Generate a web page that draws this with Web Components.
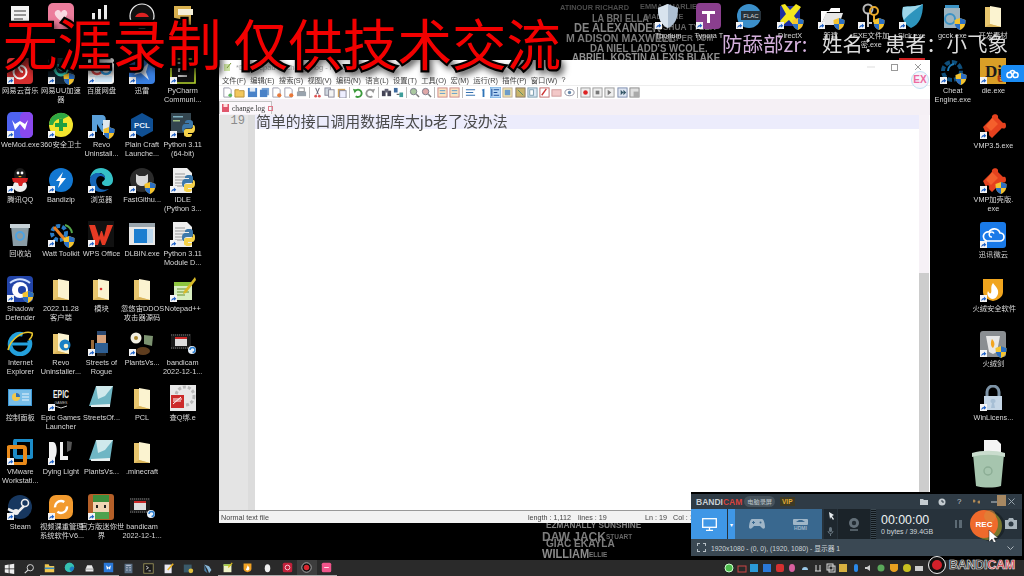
<!DOCTYPE html>
<html lang="zh">
<head>
<meta charset="utf-8">
<title>Desktop</title>
<style>
  html, body { margin: 0; padding: 0; background: #000; }
  body { width: 1024px; height: 576px; overflow: hidden; font-family: "Liberation Sans", "Noto Sans CJK SC", sans-serif; }
</style>
</head>
<body>
<x-desktop>
  <wall-names></wall-names>

  <icon-grid style="left:0;top:1px" cols="5">
    <desk-icon icon="doc"></desk-icon>
    <desk-icon icon="pink"></desk-icon>
    <desk-icon icon="chart"></desk-icon>
    <desk-icon icon="ring"></desk-icon>
    <desk-icon icon="yellowdoc"></desk-icon>

    <desk-icon icon="netease" arrow>网易云音乐</desk-icon>
    <desk-icon icon="uu" arrow shield>网易UU加速<br>器</desk-icon>
    <desk-icon icon="baidu" arrow>百度网盘</desk-icon>
    <desk-icon icon="xunlei" arrow>迅雷</desk-icon>
    <desk-icon icon="pycharm" arrow>PyCharm<br>Communi...</desk-icon>

    <desk-icon icon="wemod" arrow>WeMod.exe</desk-icon>
    <desk-icon icon="s360" arrow>360安全卫士</desk-icon>
    <desk-icon icon="revo" arrow shield>Revo<br>Uninstall...</desk-icon>
    <desk-icon icon="pcl" arrow>Plain Craft<br>Launche...</desk-icon>
    <desk-icon icon="python" arrow>Python 3.11<br>(64-bit)</desk-icon>

    <desk-icon icon="qq" arrow>腾讯QQ</desk-icon>
    <desk-icon icon="bandizip" arrow>Bandizip</desk-icon>
    <desk-icon icon="edge" arrow>浏览器</desk-icon>
    <desk-icon icon="github" arrow shield>FastGithu...</desk-icon>
    <desk-icon icon="idle" arrow>IDLE<br>(Python 3...</desk-icon>

    <desk-icon icon="bin">回收站</desk-icon>
    <desk-icon icon="watt" arrow shield>Watt Toolkit</desk-icon>
    <desk-icon icon="wps" arrow>WPS Office</desk-icon>
    <desk-icon icon="dlbin">DLBIN.exe</desk-icon>
    <desk-icon icon="idle" arrow>Python 3.11<br>Module D...</desk-icon>

    <desk-icon icon="shadow" arrow shield>Shadow<br>Defender</desk-icon>
    <desk-icon icon="folder">2022.11.28<br>客户端</desk-icon>
    <desk-icon icon="folderred">模块</desk-icon>
    <desk-icon icon="folder">忽悠宙DDOS<br>攻击器源码</desk-icon>
    <desk-icon icon="notepad" arrow>Notepad++</desk-icon>

    <desk-icon icon="ie">Internet<br>Explorer</desk-icon>
    <desk-icon icon="folderedge">Revo<br>Uninstaller...</desk-icon>
    <desk-icon icon="rogue" arrow>Streets of<br>Rogue</desk-icon>
    <desk-icon icon="plants" arrow>PlantsVs...</desk-icon>
    <desk-icon icon="bandifile">bandicam<br>2022-12-1...</desk-icon>

    <desk-icon icon="panel">控制面板</desk-icon>
    <desk-icon icon="epic" arrow>Epic Games<br>Launcher</desk-icon>
    <desk-icon icon="notes">StreetsOf...</desk-icon>
    <desk-icon icon="folder">PCL</desk-icon>
    <desk-icon icon="qbang">查Q绑.e</desk-icon>

    <desk-icon icon="vmware" arrow>VMware<br>Workstati...</desk-icon>
    <desk-icon icon="dying" arrow>Dying Light</desk-icon>
    <desk-icon icon="notes">PlantsVs...</desk-icon>
    <desk-icon icon="folder">.minecraft</desk-icon>
    <div></div>

    <desk-icon icon="steam" arrow>Steam</desk-icon>
    <desk-icon icon="orange" arrow>视频课重管理<br>系统软件V6...</desk-icon>
    <desk-icon icon="mini" arrow>官方版迷你世<br>界</desk-icon>
    <desk-icon icon="bandifile">bandicam<br>2022-12-1...</desk-icon>
  </icon-grid>

  <icon-grid style="left:648px;top:1px" cols="9">
    <desk-icon icon="thorium" arrow>Thorium</desk-icon>
    <desk-icon icon="tpurple" arrow>Typora T</desk-icon>
    <desk-icon icon="flac" arrow></desk-icon>
    <desk-icon icon="xcross" arrow shield>DirectX</desk-icon>
    <desk-icon icon="whitefolder" arrow shield>新建</desk-icon>
    <desk-icon icon="keys" arrow shield>EXE文件加<br>密.exe</desk-icon>
    <desk-icon icon="blueshield" arrow>Sick.exe</desk-icon>
    <desk-icon icon="canlock" shield>gcck.exe</desk-icon>
    <desk-icon icon="folder">开发素材</desk-icon>
  </icon-grid>

  <icon-grid style="left:932.5px;top:56px" cols="2">
    <desk-icon icon="cheat" arrow shield>Cheat<br>Engine.exe</desk-icon>
    <desk-icon icon="die" arrow>die.exe</desk-icon>
    <div></div><desk-icon icon="puzzle" arrow>VMP3.5.exe</desk-icon>
    <div></div><desk-icon icon="puzzle" arrow shield>VMP加壳版.<br>exe</desk-icon>
    <div></div><desk-icon icon="cloud" arrow>迅讯微云</desk-icon>
    <div></div><desk-icon icon="huorong" arrow>火绒安全软件</desk-icon>
    <div></div><desk-icon icon="hrsword" arrow shield>火绒剑</desk-icon>
    <div></div><desk-icon icon="lock" arrow>WinLicens...</desk-icon>
  </icon-grid>

  <pet-bin></pet-bin>
  <cloud-tab></cloud-tab>
  <npp-window></npp-window>
  <task-bar></task-bar>
  <bandi-panel></bandi-panel>
  <bandi-mark></bandi-mark>
  <top-banner></top-banner>
</x-desktop>

<script>
// icon artwork, all on a 26x26 box
const FOLDER = '<path d="M5 4h7l2 2h7v18H5z" fill="#e8c66e"/><path d="M10 3l11 2v19l-11-3z" fill="#fbf3d0"/><path d="M5 24l5-3 11 3z" fill="#d9b45a"/>';
const PY = '<path d="M15 11c0-3 2-3 4-3s4 0 4 3v3c0 1-1 2-2 2h-4c-2 0-3 1-3 3v1c-2 0-2-2-2-4s1-4 3-4h4v-1z" fill="#3c78aa"/><path d="M23 13c2 0 2 2 2 4s-1 4-3 4h-4v1h4c0 3-2 3-4 3s-4 0-4-3v-3c0-1 1-2 2-2h4c2 0 3-1 3-3z" fill="#f5d24a"/>';
const ICONS = {
  doc: '<path d="M4 3h18v22H4z" fill="#f2f2f2"/><path d="M7 8h12M7 12h12M7 16h9" stroke="#777" stroke-width="1.5"/>',
  pink: '<rect x="0" y="0" width="26" height="26" rx="5" fill="#ec7d9c"/><path d="M7 9c3-4 6-1 6 1 0-2 4-5 6-1s-6 9-6 9-8-5-6-9z" fill="#fff" opacity=".7"/>',
  chart: '<path d="M4 22V10h3v12zM10 22V6h3v16zM16 22V2h3v20z" fill="#eee"/>',
  ring: '<circle cx="13" cy="13" r="12" fill="#111" stroke="#eee" stroke-width="1.2"/><path d="M6 14a8 8 0 0 1 14 0z" fill="#d22"/>',
  yellowdoc: '<path d="M4 3h17v22H4z" fill="#d8b04e"/><path d="M8 6h15v6H8z" fill="#f5f0d8"/>',
  netease: '<rect width="26" height="26" rx="4" fill="#d52f2f"/><circle cx="13" cy="14" r="6.5" fill="none" stroke="#fff" stroke-width="2"/><path d="M14 4c-3 1-3 5-1 8 1 2 3 2 3 2" fill="none" stroke="#fff" stroke-width="2"/>',
  uu: '<rect width="26" height="26" rx="4" fill="#12222e"/><path d="M6 8c1 12 13 12 14 0" fill="none" stroke="#34c4b0" stroke-width="3"/><path d="M10 6c1 8 6 8 7 0" fill="none" stroke="#1e8f92" stroke-width="2"/>',
  baidu: '<rect width="26" height="26" rx="3" fill="#f4f4f4"/><circle cx="9" cy="11" r="5" fill="none" stroke="#df4a4a" stroke-width="2.5"/><circle cx="18" cy="11" r="5" fill="none" stroke="#2f9fe8" stroke-width="2.5"/><path d="M2 18h22v6H2z" fill="#cfe6f6"/>',
  xunlei: '<rect width="26" height="26" rx="4" fill="#3a80e2"/><path d="M5 8l8 3 7-7-3 10 3 8-8-7-7 2 4-5z" fill="#dfe9f7"/>',
  pycharm: '<rect width="26" height="26" fill="#111"/><path d="M1 1h24v24H1z" fill="none" stroke="#b5d32c" stroke-width="1.6"/><path d="M8 18h9" stroke="#fff" stroke-width="1.5"/><path d="M7 5h5c3 0 3 6 0 6H9v3M15 5h4" stroke="#ddd" stroke-width="1.6" fill="none"/>',
  wemod: '<rect width="26" height="26" rx="5" fill="#4f63f0"/><rect x="13" width="13" height="26" rx="5" fill="#8a48ee"/><path d="M5 8l3 10 5-6 5 6 3-10-3 4-5-3-5 3z" fill="#fff"/>',
  s360: '<circle cx="13" cy="13" r="12" fill="#f4e52e"/><path d="M1 13a12 12 0 0 1 20-9l-6 3a8 8 0 0 0-10 6z" fill="#2ea843"/><path d="M13 7v12M7 13h12" stroke="#1e9e42" stroke-width="4"/>',
  revo: '<path d="M4 3h10c5 0 5 8 0 9l5 8h-5l-5-8v8H4z" fill="#5a9fd8"/><path d="M15 8h7l-1 15h-6z" fill="#dfe8ee"/>',
  pcl: '<path d="M13 1l11 6v12l-11 6-11-6V7z" fill="#0f4f93"/><text x="13" y="16" font-size="8" font-weight="700" text-anchor="middle" fill="#e6f1fb" font-family="Liberation Sans">PCL</text>',
  python: '<rect x="1" y="1" width="20" height="20" fill="#33454f"/><rect x="3" y="4" width="10" height="1.5" fill="#7fb0c0"/><rect x="3" y="8" width="7" height="1.5" fill="#a0c080"/>' + PY,
  idle: '<path d="M3 1h14l5 5v20H3z" fill="#eee"/><path d="M5 7h10M5 10h12M5 13h8M5 16h9M5 19h7" stroke="#999"/>' + PY,
  qq: '<ellipse cx="13" cy="8" rx="6" ry="7" fill="#1a1a1a"/><ellipse cx="13" cy="19" rx="7" ry="6" fill="#eee"/><path d="M5 11h16l-1 4-4 1-1 3h-3l-1-3-5-1z" fill="#d62020"/><circle cx="11" cy="6" r="1.4" fill="#fff"/><circle cx="15" cy="6" r="1.4" fill="#fff"/><path d="M11 9h4l-2 1.5z" fill="#f5b32a"/>',
  bandizip: '<circle cx="13" cy="13" r="12" fill="#1277d1"/><path d="M15 5l-7 9h4l-2 7 8-10h-5z" fill="#fff"/>',
  edge: '<path d="M13 1a12 12 0 0 1 12 12c0 4-3 6-6 6-4 0-5-2-5-3 0-2 3-2 3-5 0-3-3-5-6-5C7 6 3 9 2 11 3 5 7 1 13 1z" fill="#35c1c7"/><path d="M2 11c1-3 5-5 8-5 3 0 8 2 7 6-1-3-5-4-7-2-3 2-2 8 1 11 2 2 6 2 10 1-3 2-5 3-8 3C6 25 1 19 2 11z" fill="#1565b5"/>',
  github: '<circle cx="13" cy="13" r="12" fill="#2b2b2b"/><path d="M7 7l3 2h6l3-2v7c0 3-3 5-6 5s-6-2-6-5z" fill="#d8d8d8"/>',
  bin: '<path d="M4 5h18l-2 20H6z" fill="#8b9da6"/><path d="M3 3h20v4H3z" fill="#c7d2d8"/><circle cx="13" cy="15" r="4" fill="none" stroke="#4fa3e0" stroke-width="2"/>',
  watt: '<circle cx="11" cy="12" r="7" fill="none" stroke="#2a7cc6" stroke-width="4" stroke-dasharray="4 2"/><path d="M6 6l12 14" stroke="#e67d22" stroke-width="3"/><path d="M17 4a10 10 0 0 1 7 8" fill="none" stroke="#56a64a" stroke-width="2"/>',
  wps: '<rect width="26" height="26" fill="#111"/><path d="M1 4h6l4 12 2-6h1l2 6 3-12h6l-8 20h-3l-2-6-2 6h-3z" fill="#e53a24"/>',
  dlbin: '<rect y="2" width="26" height="22" fill="#e8e8e8"/><rect y="2" width="26" height="4" fill="#9aa5ad"/><rect x="5" y="8" width="13" height="14" fill="#1c7ed0"/><rect x="18" y="8" width="6" height="14" fill="#bcd8ef"/>',
  shadow: '<rect width="26" height="26" rx="4" fill="#2244a8"/><circle cx="13" cy="14" r="8" fill="#fff"/><circle cx="15" cy="14" r="4" fill="#2244a8"/><path d="M3 7c6-5 14-5 20 0" stroke="#cfe0ff" stroke-width="2" fill="none"/>',
  folder: FOLDER,
  folderred: FOLDER + '<circle cx="13" cy="13" r="1.3" fill="#d33"/>',
  folderedge: FOLDER + '<circle cx="17" cy="15" r="5.5" fill="#1a80c4"/><circle cx="18" cy="16" r="2.3" fill="#fbf3d0"/>',
  notepad: '<path d="M4 6h18v18H4z" fill="#d8eec0"/><path d="M4 6h18v4H4z" fill="#8ec63f"/><path d="M7 13h10M7 16h12M7 19h8" stroke="#699030"/><path d="M25 1L14 15l-1 3 3-1L26 4z" fill="#d8b928"/>',
  ie: '<circle cx="13" cy="14" r="10" fill="none" stroke="#23a0dc" stroke-width="4.5" stroke-dasharray="44 9" transform="rotate(32 13 14)"/><path d="M5 14h17" stroke="#23a0dc" stroke-width="3"/><path d="M1 20C4 8 17 0 25 3c1 2-1 5-3 7" fill="none" stroke="#e8c52e" stroke-width="1.6"/>',
  rogue: '<rect x="9" y="1" width="9" height="4" fill="#2c4a72"/><rect x="9" y="5" width="9" height="8" fill="#d6a27c"/><rect x="7" y="13" width="13" height="10" fill="#2e5f94"/><rect x="3" y="10" width="3" height="12" fill="#9b6b3a"/><rect x="9" y="23" width="9" height="3" fill="#222"/>',
  plants: '<circle cx="7" cy="8" r="5.5" fill="#f1efe2"/><circle cx="7" cy="8" r="2" fill="#a9872e"/><path d="M15 5l9 1-1 10-8-2z" fill="#7c9270"/><ellipse cx="14" cy="21" rx="7" ry="4" fill="#5f3d1e"/>',
  bandifile: '<rect x="1" y="4" width="20" height="15" fill="#1a1a1a"/><rect x="5" y="7" width="12" height="9" fill="#ddd"/><rect x="5" y="7" width="12" height="2" fill="#c92828"/><path d="M1 5h20M1 18h20" stroke="#777" stroke-dasharray="1 1"/><circle cx="22" cy="20" r="4" fill="#eaf2fa"/><path d="M20 20a2.5 2.5 0 1 1 2.5 2.5" stroke="#2a7ed0" fill="none" stroke-width="1.4"/>',
  panel: '<rect x="1" y="4" width="24" height="17" fill="#3e9ad8"/><rect x="2" y="5" width="22" height="15" fill="#79bee8"/><circle cx="9" cy="12" r="4" fill="#f2c84a"/><path d="M9 12V8a4 4 0 0 1 4 4z" fill="#3070b8"/><path d="M15 9h7M15 12h7M15 15h7" stroke="#eaf5fd"/>',
  epic: '<text x="13" y="13" font-size="11" font-weight="700" text-anchor="middle" fill="#eee" font-family="Liberation Sans" textLength="16" lengthAdjust="spacingAndGlyphs">EPIC</text><text x="13" y="18.500" font-size="3.600" text-anchor="middle" fill="#bbb" font-family="Liberation Sans">GAMES</text><path d="M7 21l6 2 6-2" stroke="#ccc" fill="none"/>',
  notes: '<path d="M8 1h17l-3 20H1z" fill="#6fb6c4"/><path d="M8 1h17l-8 10-7 3z" fill="#cfe9ec"/><path d="M3 20l19-1v3H3z" fill="#e8f0f0"/>',
  qbang: '<rect width="26" height="26" fill="#e8e8e8"/><circle cx="15" cy="11" r="9" fill="none" stroke="#b8b8b8" stroke-width="3" stroke-dasharray="3 2"/><rect x="1" y="10" width="13" height="13" fill="#cc2a2a"/><path d="M3 19l8-7M3 14h9M3 16h8" stroke="#fff"/>',
  vmware: '<rect x="8" y="1" width="17" height="17" rx="2" fill="none" stroke="#1c8cc8" stroke-width="4"/><rect x="1" y="8" width="17" height="17" rx="2" fill="none" stroke="#e98a1a" stroke-width="4"/>',
  dying: '<path d="M1 3h4c5 0 5 17 0 17H1zM12 3h3v14h5v4h-8z" fill="#f2f2f2"/><path d="M19 2l5 1-1 8-4 2z" fill="#555"/>',
  steam: '<circle cx="13" cy="13" r="12" fill="#17375f"/><circle cx="18" cy="9" r="3.5" fill="none" stroke="#eee" stroke-width="1.6"/><path d="M1 15l9 4 7-7" fill="none" stroke="#eee" stroke-width="2.5"/><circle cx="9" cy="18" r="3" fill="#eee"/>',
  orange: '<rect x="1" y="1" width="24" height="24" rx="7" fill="#f29a2e"/><circle cx="13" cy="13" r="6" fill="none" stroke="#fff" stroke-width="2.4" stroke-dasharray="13 5"/>',
  mini: '<rect width="26" height="26" rx="3" fill="#b45f28"/><rect x="5" y="1" width="16" height="8" fill="#3d8f3d"/><rect x="5" y="8" width="16" height="10" fill="#f1d5b4"/><rect x="8" y="11" width="2" height="3" fill="#222"/><rect x="16" y="11" width="2" height="3" fill="#222"/><rect x="5" y="18" width="16" height="7" fill="#4ea24e"/>',
  thorium: '<path d="M13 1l10 4c0 10-3 17-10 20C6 22 3 15 3 5z" fill="#aebfd2"/><path d="M13 1v24C6 22 3 15 3 5z" fill="#d8e3ee"/>',
  tpurple: '<rect width="25" height="26" rx="4" fill="#8a3f8e"/><path d="M6 8h13v3h-5v9h-3v-9H6z" fill="#fff"/>',
  flac: '<circle cx="13" cy="13" r="12" fill="#3b8fca"/><rect x="5" y="8" width="20" height="9" fill="#27333c"/><text x="15" y="15" font-size="6" text-anchor="middle" fill="#ddd" font-family="Liberation Sans">FLAC</text>',
  xcross: '<rect x="3" y="3" width="20" height="20" fill="#1c2ea0"/><path d="M4 2l4-1 5 6 6-6 5 3-7 9 6 8-5 3-6-7-6 5-3-4 6-7z" fill="#f2e51e"/>',
  whitefolder: '<path d="M3 8h8l2-3h9v4H9L3 22z" fill="#fff"/><path d="M3 22l5-12h17l-4 12z" fill="#e6e6e6"/>',
  keys: '<circle cx="10" cy="6" r="4.5" fill="none" stroke="#b6b6b6" stroke-width="2"/><path d="M10 10v14M10 20h4" stroke="#c8c8c8" stroke-width="2"/><circle cx="16" cy="8" r="4" fill="none" stroke="#e8a82a" stroke-width="2"/><path d="M16 12v7" stroke="#e8a82a" stroke-width="2"/>',
  blueshield: '<path d="M24 1c-7 3-14 2-20 3-2 9 0 17 8 21 8-3 12-12 12-24z" fill="#2d94bd"/><path d="M24 1c-7 3-14 2-20 3-1 6-1 9 1 13C9 12 17 6 24 1z" fill="#9ed7ea"/>',
  canlock: '<path d="M6 2h14v3H6z" fill="#3c93c5"/><path d="M5 5h16v20H5z" fill="#9db4c0"/><circle cx="11" cy="16" r="5" fill="none" stroke="#3c93c5" stroke-width="2"/>',
  cheat: '<circle cx="12" cy="13" r="9" fill="none" stroke="#0f4f7c" stroke-width="4" stroke-dasharray="5 2"/><path d="M14 6a7 7 0 0 0-6 7" fill="none" stroke="#1c7ab5" stroke-width="2"/>',
  die: '<rect width="26" height="26" fill="#d99f27"/><text x="5" y="19" font-size="17" font-weight="700" fill="#1a1a1a" font-family="Liberation Serif">Di</text><text x="17" y="24" font-size="15" font-weight="700" fill="#ad3c16" font-family="Liberation Serif">e</text>',
  puzzle: '<path d="M3 14l9-9c-1-4 5-5 6-2 0 2 0 2 1 3l4 4c2-1 3 0 3 3s-3 3-4 2L12 25c-2-2-3-2-3-4 1-3-2-4-3-1z" fill="#e5411e"/><path d="M12 5l6 6-7 7-5-5z" fill="#f45f2c"/>',
  cloud: '<rect width="26" height="26" rx="3" fill="#1a7ae8"/><path d="M7 19h13a4 4 0 0 0 0-8 6 6 0 0 0-11-1 4.5 4.5 0 0 0-2 9z" fill="none" stroke="#fff" stroke-width="1.7"/><path d="M12 15a2.5 2.5 0 1 1 2-3.5" fill="none" stroke="#fff" stroke-width="1.5"/>',
  huorong: '<path d="M3 3h20v13c0 5-5 8-10 9C8 24 3 21 3 16z" fill="#f0a51e"/><path d="M13 7c3 4 6 6 5 11-1 3-3 5-6 5-3-1-6-4-4-8 1 2 2 3 3 2 1-3-1-6 2-10z" fill="#fff"/>',
  hrsword: '<rect width="26" height="26" rx="3" fill="#8a8e92"/><path d="M6 5h14l-3 16-4 2-4-2z" fill="#e8e8e8"/><path d="M12 8c3 3 3 6 1 9-2-1-3-5-1-9z" fill="#f2a522"/>',
  lock: '<path d="M7 11V7a6 6 0 0 1 12 0v4" fill="none" stroke="#7d93a6" stroke-width="3"/><rect x="4" y="11" width="18" height="14" fill="#c5d6e6"/><path d="M13 14a2 2 0 0 1 1 4l1 5h-4l1-5a2 2 0 0 1 1-4z" fill="#a7bfd5"/>'
};

class DeskIcon extends HTMLElement {
  connectedCallback() {
    const art = ICONS[this.getAttribute('icon')] || '';
    const arrow = this.hasAttribute('arrow') ? `<svg class="arrow" viewBox="0 0 8 8"><rect width="8" height="8" fill="#f4f4f4"/><path d="M1.500 7C1.500 4.500 2.800 3.400 4.500 3.400V1.800L7.200 4.200 4.500 6.500V5C3.400 5 2.400 5.600 1.500 7z" fill="#1f62c8"/></svg>` : '';
    const shield = this.hasAttribute('shield') ? `<svg class="shield" viewBox="0 0 12 12"><path d="M6 0l5.500 2c0 5-1 8-5.500 10C1.500 10 .5 7 .5 2z" fill="#f4c430"/><path d="M6 0l5.500 2c0 1.500 0 2.700-.3 4H6zM6 6v6C2.500 10.500 1.200 8.500.8 6z" fill="#2b6fc4"/></svg>` : '';
    this.attachShadow({ mode: 'open' }).innerHTML = `
      <style>
        :host { display: flex; flex-direction: column; align-items: center; width: 40.6px; height: 54.5px; box-sizing: border-box; padding-top: 2px; }
        .pic { position: relative; width: 26px; height: 26px; flex: none; }
        .pic svg.main { width: 26px; height: 26px; display: block; }
        .arrow { position: absolute; left: 0; bottom: 0; width: 7px; height: 7px; }
        .shield { position: absolute; right: -1px; bottom: -1px; width: 12px; height: 12px; }
        .label { margin-top: 2px; width: 42px; text-align: center; font-size: 7.3px; line-height: 9.4px; color: #d8d8d8; white-space: nowrap; filter: blur(.3px); }
      </style>
      <div class="pic"><svg class="main" viewBox="0 0 26 26">${art}</svg>${arrow}${shield}</div>
      <div class="label"><slot></slot></div>`;
  }
}
customElements.define('desk-icon', DeskIcon);

class IconGrid extends HTMLElement {
  connectedCallback() {
    const cols = this.getAttribute('cols') || 5;
    this.attachShadow({ mode: 'open' }).innerHTML = `
      <style>
        :host { position: absolute; display: grid; grid-template-columns: repeat(${cols}, 40.6px); grid-auto-rows: 54.5px; justify-items: center; }
      </style><slot></slot>`;
  }
}
customElements.define('icon-grid', IconGrid);

class XDesktop extends HTMLElement {
  constructor() {
    super();
    this.attachShadow({ mode: 'open' }).innerHTML = `
      <style>:host { display: block; position: relative; width: 1024px; height: 576px; background: #000; overflow: hidden; }</style>
      <slot></slot>`;
  }
}
customElements.define('x-desktop', XDesktop);

// wallpaper lettering, scattered names on a free canvas
class WallNames extends HTMLElement {
  connectedCallback() {
    const names = [
      [560, 4, 8, '#4c4c4c', 'ATINOUR RICHARD'], [592, 14, 10, '#707070', 'LA BRI ELLA'], [645, 13, 8, '#555', 'MADELINE'],
      [574, 22, 12, '#858585', 'DE ALEXANDER'], [652, 23, 9, '#666', 'JOSHUA TYLER'], [566, 33, 11.500, '#7a7a7a', 'M ADISON MAXWELL'],
      [658, 34, 9, '#6a6a6a', 'HARPER TOM'], [590, 43, 10.500, '#858585', 'DA NIEL LADD\'S WCOLE.'], [572, 52, 10.500, '#909090', 'ABRIEL KOSTIN ALEXIS BLAKE'],
      [640, 3, 8, '#505050', 'EMMA CHARLIE'],
      [546, 521, 9, '#808080', 'EZMANALLY SUNSHINE'], [542, 530, 13, '#7c7c7c', 'DAW JACK'], [606, 533, 7, '#666', 'STUART'],
      [546, 538, 11, '#7c7c7c', 'GIAC EKAYLA'], [542, 548, 12, '#8c8c8c', 'WILLIAM'], [589, 551, 7, '#777', 'ELLIE']
    ];
    const spans = names.map(n => `<span style="left:${n[0]}px;top:${n[1]}px;font-size:${n[2]}px;color:${n[3]}">${n[4]}</span>`).join('');
    this.attachShadow({ mode: 'open' }).innerHTML = `
      <style>
        :host { position: absolute; inset: 0; display: block; }
        span { position: absolute; white-space: nowrap; font-family: "Liberation Sans Narrow", "Liberation Sans", sans-serif; font-weight: 700; filter: blur(.4px); transform: scaleX(.92); transform-origin: left; line-height: 1; }
      </style>${spans}`;
  }
}
customElements.define('wall-names', WallNames);

class PetBin extends HTMLElement {
  constructor() {
    super();
    this.attachShadow({ mode: 'open' }).innerHTML = `
      <style>:host { position: absolute; left: 970px; top: 438px; width: 36px; height: 52px; display: block; }</style>
      <svg width="36" height="52" viewBox="0 0 36 52">
        <path d="M14 2h13l4 4v14H14z" fill="#f4f4f4"/>
        <path d="M3 16c10-3 22-3 31 0l-3 32c-7 2-17 2-25 0z" fill="#a6c5ae"/>
        <path d="M2 15c10-3 23-3 33 0v4c-10-3-23-3-33 0z" fill="#c9dccd"/>
        <circle cx="18" cy="33" r="4" fill="none" stroke="#8cad95" stroke-width="1.400"/>
      </svg>`;
  }
}
customElements.define('pet-bin', PetBin);

class CloudTab extends HTMLElement {
  constructor() {
    super();
    this.attachShadow({ mode: 'open' }).innerHTML = `
      <style>:host { position: absolute; left: 1001px; top: 65px; width: 23px; height: 17px; display: flex; align-items: center; justify-content: center; background: #1a8cf5; border-radius: 4px 0 0 4px; }</style>
      <svg width="13" height="11" viewBox="0 0 13 11" fill="none" stroke="#fff" stroke-width="1.500"><circle cx="3.500" cy="7" r="2.600"/><circle cx="9.500" cy="7" r="2.600"/><path d="M3.800 4.500a2.800 2.800 0 0 1 5.400 0"/></svg>`;
  }
}
customElements.define('cloud-tab', CloudTab);

// notepad++ window
const TB = {
  newp: '<path d="M2 1h6l2 2v8H2z" fill="#fff" stroke="#99a"/><circle cx="9" cy="9" r="2" fill="#5cb85c"/>',
  open: '<path d="M1 3h4l1 1h5v7H1z" fill="#f2c75c" stroke="#b8913a"/>',
  save: '<rect x="1" y="1" width="10" height="10" fill="#4a82c8"/><rect x="3" y="1" width="6" height="4" fill="#dfe9f5"/>',
  saveall: '<rect x="3" y="1" width="8" height="8" fill="#7aa3d3"/><rect x="1" y="3" width="8" height="8" fill="#4a82c8"/>',
  close: '<path d="M2 1h6l2 2v8H2z" fill="#fff" stroke="#99a"/><circle cx="9" cy="9" r="2.300" fill="#e8793a"/>',
  print: '<rect x="3" y="1" width="6" height="4" fill="#fff" stroke="#888"/><rect x="1" y="5" width="10" height="5" fill="#99a3ad"/>',
  cut: '<path d="M4 1l3 7M8 1L5 8" stroke="#556"/><circle cx="4" cy="10" r="1.500" fill="#d55"/><circle cx="8" cy="10" r="1.500" fill="#d55"/>',
  copy: '<rect x="1" y="1" width="6" height="8" fill="#cfd7df" stroke="#889"/><rect x="5" y="3" width="6" height="8" fill="#f3f3f3" stroke="#889"/>',
  paste: '<rect x="2" y="2" width="8" height="9" fill="#d2a45c"/><rect x="4" y="4" width="7" height="8" fill="#eef" stroke="#889"/>',
  undo: '<path d="M3 5a4 4 0 1 1 1 5" fill="none" stroke="#3c9a3c" stroke-width="2"/><path d="M1 2l4 1-2 4z" fill="#3c9a3c"/>',
  redo: '<path d="M9 5a4 4 0 1 0-1 5" fill="none" stroke="#999" stroke-width="2"/><path d="M11 2L7 3l2 4z" fill="#999"/>',
  find: '<rect x="1" y="4" width="4" height="6" fill="#445"/><rect x="7" y="4" width="4" height="6" fill="#445"/><rect x="4" y="2" width="4" height="4" fill="#667"/>',
  repl: '<rect x="1" y="1" width="4" height="5" fill="#3e6a9e"/><rect x="7" y="6" width="4" height="5" fill="#3e9e9a"/><path d="M4 8h3" stroke="#333"/>',
  zin: '<circle cx="5" cy="5" r="3.500" fill="#aac8a0" stroke="#778"/><path d="M8 8l3 3" stroke="#777" stroke-width="1.500"/>',
  zout: '<circle cx="5" cy="5" r="3.500" fill="#e0a8a8" stroke="#778"/><path d="M8 8l3 3" stroke="#777" stroke-width="1.500"/>',
  syncv: '<rect x="1" y="1" width="10" height="10" fill="#fbe3c0" stroke="#c88"/><path d="M3 4h6M3 7h6" stroke="#59c"/>',
  wrap: '<path d="M1 3h10M1 6h8M1 9h10" stroke="#3672b0" stroke-width="1.300"/>',
  one: '<path d="M4 3l3-1v9H5V4z" fill="#2e74b8"/>',
  guide: '<rect x="0" y="0" width="12" height="12" fill="#b8d8f5" stroke="#5aa0dc"/><path d="M2 2v8M4 3h6M4 6h4M4 9h6" stroke="#1d4f9a" stroke-width="1.200"/>',
  map: '<rect x="1" y="1" width="10" height="10" fill="#f6e6a8" stroke="#ba9"/><rect x="3" y="3" width="6" height="6" fill="#6d9cc8"/>',
  book: '<rect x="1" y="1" width="10" height="10" fill="#c8b46a" stroke="#876"/><path d="M3 3l6 6" stroke="#586"/>',
  sheet: '<rect x="1" y="1" width="10" height="10" fill="#dbe7f3" stroke="#79a"/><rect x="3" y="3" width="4" height="6" fill="#fff" stroke="#79a"/>',
  fx: '<rect x="1" y="1" width="10" height="10" fill="#fff" stroke="#b66"/><path d="M3 9l5-7" stroke="#c33" stroke-width="1.500"/>',
  env: '<rect x="1" y="3" width="10" height="7" fill="#f3c8c8" stroke="#c99"/>',
  eye: '<ellipse cx="6" cy="6" rx="5" ry="3.500" fill="#fff" stroke="#889"/><circle cx="6" cy="6" r="1.800" fill="#68a"/>',
  rec: '<rect x="1" y="1" width="10" height="10" fill="#eee" stroke="#999"/><circle cx="6" cy="6" r="2.500" fill="#d22"/>',
  stop: '<rect x="1" y="1" width="10" height="10" fill="#eee" stroke="#999"/><rect x="4" y="4" width="4" height="4" fill="#777"/>',
  play: '<rect x="1" y="1" width="10" height="10" fill="#eee" stroke="#999"/><path d="M4 3l4 3-4 3z" fill="#777"/>',
  many: '<rect x="1" y="1" width="10" height="10" fill="#dfe6f2" stroke="#78a"/><path d="M4 3l3 3-3 3zM7 3l3 3-3 3z" fill="#356"/>',
  savem: '<rect x="1" y="1" width="10" height="10" fill="#e0e0e0" stroke="#888"/><rect x="5" y="5" width="6" height="6" fill="#aaa"/>'
};
const TB_ROW = ['newp','open','save','saveall','close','close','print','|','cut','copy','paste','|','undo','redo','|','find','repl','|','zin','zout','|','syncv','syncv','|','wrap','one','guide','map','book','sheet','fx','env','eye','|','rec','stop','play','many','savem'];

class NppWindow extends HTMLElement {
  connectedCallback() {
    const menu = ['文件(F)','编辑(E)','搜索(S)','视图(V)','编码(N)','语言(L)','设置(T)','工具(O)','宏(M)','运行(R)','插件(P)','窗口(W)','?'];
    const tools = TB_ROW.map(k => k === '|' ? '<i></i>' : `<svg viewBox="0 0 12 12">${TB[k]}</svg>`).join('');
    this.attachShadow({ mode: 'open' }).innerHTML = `
      <style>
        :host { position: absolute; left: 219px; top: 60px; width: 711px; height: 463px; display: flex; flex-direction: column; background: #fff; color: #333; overflow: hidden; }
        .title { height: 14px; flex: none; display: flex; align-items: center; padding-left: 4px; gap: 4px; font-size: 7.500px; color: #aaa; filter: blur(.3px); }
        .title .ctl { margin-left: auto; display: flex; align-items: center; gap: 16px; padding-right: 8px; }
        .menu { height: 12px; flex: none; display: flex; gap: 4.300px; padding-left: 3px; align-items: center; font-size: 7.300px; color: #444; border-bottom: 1px solid #eee; box-sizing: border-box; filter: blur(.25px); }
        .tools { height: 13px; flex: none; display: flex; align-items: center; padding-left: 3px; gap: 1.300px; background: #fff; }
        .tools svg { width: 11px; height: 11px; flex: none; filter: blur(.25px); }
        .tools i { width: 1px; height: 11px; background: #bbb; margin: 0 .7px; flex: none; }
        .tabs { height: 16px; flex: none; display: flex; align-items: flex-end; background: #f5f0f5; padding-bottom: 1px; box-sizing: border-box; }
        .tab { height: 13px; width: 53px; box-sizing: border-box; display: flex; align-items: center; gap: 3px; padding: 0 2px; background: #fbf7fb; border: 1px solid #c4c4c4; border-bottom: 0; font: 7.600px "Liberation Serif", serif; color: #333; filter: blur(.25px); }
        .tab svg { width: 7px; height: 8px; flex: none; }
        .tab b { margin-left: auto; width: 5px; height: 5px; border: 1px solid #e07a8a; box-sizing: border-box; flex: none; }
        .body { flex: 1; min-height: 0; display: flex; }
        .gutter { width: 36px; flex: none; background: linear-gradient(90deg, #e4e4e4 29px, #dcdcdc 29px); color: #8a8a8a; font: 12px "Liberation Mono", monospace; text-align: right; box-sizing: border-box; padding: 0 10px 0 0; line-height: 13px; }
        .text { flex: 1; min-width: 0; }
        .line { height: 14px; background: #ececfc; font: 14.900px/11px "Noto Sans CJK SC", "Liberation Serif", serif; color: #4a4a4a; padding-left: 1px; white-space: nowrap; filter: blur(.2px); }
        .sbar { width: 10px; flex: none; display: flex; flex-direction: column; background: #f6f1f6; margin-right: 1px; }
        .sbar div { margin-top: auto; height: 237px; background: #cdcdcd; }
        .status { height: 12px; flex: none; display: flex; align-items: center; font-size: 7.200px; color: #444; background: #f2f2f2; border-top: 1px solid #999; filter: blur(.25px); }
        .status span { white-space: nowrap; }
      </style>
      <div class="title">
        <svg width="9" height="9" viewBox="0 0 9 9"><rect x="1" y="1" width="6" height="7" fill="#cfe5a5"/><path d="M8 0L4 5" stroke="#7a9a3a"/></svg>
        <span>*D:\\notepad++\\change.log - Notepad++</span>
        <div class="ctl">
          <svg width="8" height="8"><path d="M0 4h8" stroke="#ddd"/></svg>
          <svg width="7" height="7"><rect x=".5" y=".5" width="6" height="6" fill="none" stroke="#999"/></svg>
          <svg width="8" height="8"><path d="M1 1l6 6M7 1L1 7" stroke="#999"/></svg>
        </div>
      </div>
      <div class="menu">${menu.map(m => `<span>${m}</span>`).join('')}</div>
      <div class="tools">${tools}</div>
      <div class="tabs"><div class="tab"><svg viewBox="0 0 7 8"><rect width="7" height="8" fill="#e0566c"/><rect x="1.500" width="4" height="3" fill="#fdd"/></svg>change.log<b></b></div></div>
      <div class="body">
        <div class="gutter">19</div>
        <div class="text"><div class="line">简单的接口调用数据库太jb老了没办法</div></div>
        <div class="sbar"><div></div></div>
      </div>
      <div class="status">
        <span style="padding-left:2px;flex:none;width:307px">Normal text file</span>
        <span style="width:50px">length : 1,112</span>
        <span style="width:67px">lines : 19</span>
        <span style="width:23px">Ln : 19</span><span style="padding-left:5px">Col : 1</span>
      </div>`;
  }
}
customElements.define('npp-window', NppWindow);

// overlays drawn by the recording
class TopBanner extends HTMLElement {
  constructor() {
    super();
    this.attachShadow({ mode: 'open' }).innerHTML = `
      <style>
        :host { position: absolute; inset: 0; display: block; pointer-events: none; font-family: "Noto Sans CJK SC", sans-serif; }
        .big { position: absolute; left: 3px; top: 7px; font-size: 54.600px; line-height: 70px; color: #f20000; white-space: nowrap; -webkit-text-stroke: 4.500px #000; paint-order: stroke fill; filter: drop-shadow(3px 4px 3px rgba(0,0,0,.6)); }
        .who { position: absolute; top: 30px; font-size: 20.500px; line-height: 26px; white-space: nowrap; color: #dcdcdc; filter: blur(.3px); }
        .redline { position: absolute; left: 899px; top: 58px; width: 26px; height: 2px; background: #d02020; }
        .ex { position: absolute; left: 911px; top: 71px; width: 18px; height: 18px; box-sizing: border-box; border-radius: 50%; background: #f6f4fb; border: 1px solid #bfe0f2; font: 700 10px/16px "Liberation Sans", sans-serif; color: #ec6aa0; text-align: center; }
      </style>
      <div class="redline"></div>
      <div class="big">无涯录制 仅供技术交流</div>
      <div class="who" style="left:722px;color:#d4b0dc">防舔部zr:</div>
      <div class="who" style="left:822px">姓名：</div>
      <div class="who" style="left:885px">患者：小飞象</div>
      <div class="ex">EX</div>`;
  }
}
customElements.define('top-banner', TopBanner);

class TaskBar extends HTMLElement {
  connectedCallback() {
    const glyph = {
      win: '<path d="M1 3l5-1v5H1zM7 2l6-1v6H7zM1 8h5v5l-5-1zM7 8h6v6l-6-1z" fill="#eee"/>',
      search: '<circle cx="8" cy="6" r="4" fill="none" stroke="#ddd" stroke-width="1.200"/><path d="M5 9l-4 4" stroke="#ddd" stroke-width="1.400"/>',
      files: '<path d="M1 3h5l1 2h6v8H1z" fill="#f0c64e"/><path d="M1 7h12v2H1z" fill="#3a8fc8"/>',
      edge: '<circle cx="7" cy="7" r="6" fill="#1b7fc4"/><path d="M1 7a6 6 0 0 1 12 0c-2-2-4-1-5 0-2 2 0 5 2 5-5 2-9-1-9-5z" fill="#37c2b0"/>',
      drive: '<path d="M2 9l2-5h6l2 5v3H2z" fill="#e8e8e8"/><path d="M2 9h10" stroke="#888"/>',
      blue: '<rect x="1" y="1" width="12" height="12" fill="#2a78d8"/><path d="M4 4l3 3 3-3-1 6-2-2-2 2z" fill="#fff"/>',
      calc: '<rect x="2" y="1" width="10" height="12" fill="#5c7186"/><path d="M4 3h6M4 6h2M8 6h2M4 9h2M8 9h2" stroke="#dde"/>',
      term: '<rect x="1" y="1" width="12" height="12" fill="#1b1b1b" stroke="#a9a060"/><path d="M4 4l3 2-3 2M7 10h3" stroke="#eee" fill="none"/>',
      note: '<rect x="2" y="2" width="9" height="11" fill="#e8e8f2"/><path d="M13 1L6 9" stroke="#e8b020" stroke-width="2"/>',
      pybox: '<rect x="1" y="2" width="10" height="10" fill="#3a5a6a"/><circle cx="10" cy="10" r="3" fill="#e0c040"/>',
      wing: '<path d="M3 2l6 2 3 5-3 4-2-5z" fill="#8ab8d8"/><path d="M3 2l2 6 2 5-4-3z" fill="#4a7fa8"/>',
      npp: '<rect x="2" y="3" width="10" height="10" fill="#eef2c8"/><path d="M2 3h10v2H2z" fill="#9cc83c"/><path d="M13 1L8 7" stroke="#d8b920" stroke-width="1.500"/>',
      fire: '<path d="M2 2h10v7c0 2-3 4-5 4s-5-2-5-4z" fill="#f0a224"/><path d="M7 4c2 2 3 4 2 6-1 1-3 1-4 0 0-2 2-3 2-6z" fill="#fff"/>',
      qq: '<ellipse cx="7" cy="8" rx="3.500" ry="5" fill="#eee"/>',
      red: '<rect x="1" y="1" width="12" height="12" rx="2" fill="#c2213b"/><circle cx="7" cy="7" r="3" fill="none" stroke="#f6cbd4" stroke-width="1.200"/>',
      rec: '<circle cx="7" cy="7" r="6" fill="#111" stroke="#ccc"/><circle cx="7" cy="7" r="3.500" fill="#d8262e"/>',
      pink: '<rect x="1" y="1" width="12" height="12" rx="2" fill="#f0548a"/><path d="M4 7h6" stroke="#fff"/>'
    };
    const items = [['win'],['search'],['files',1],['edge',1],['drive',1],['blue',1],['calc'],['term'],['note'],['pybox'],['wing'],['npp',1],['fire',1],['qq',1],['red',1],['rec',2],['pink',1]];
    this.attachShadow({ mode: 'open' }).innerHTML = `
      <style>
        :host { position: absolute; left: 0; right: 0; bottom: 0; height: 16px; display: flex; background: #2a2a2a; }
        .it { width: 19.800px; height: 16px; flex: none; display: flex; align-items: center; justify-content: center; box-sizing: border-box; filter: blur(.25px); }
        .it.on { border-bottom: 1px solid #aaa; }
        .it.act { background: #3d3d3d; border-bottom: 1px solid #aaa; }
        svg { width: 11px; height: 11px; }
      </style>
      ${items.map(i => `<div class="it ${i[1] === 1 ? 'on' : i[1] === 2 ? 'act' : ''}"><svg viewBox="0 0 14 14">${glyph[i[0]]}</svg></div>`).join('')}`;
  }
}
customElements.define('task-bar', TaskBar);

class BandiPanel extends HTMLElement {
  constructor() {
    super();
    this.attachShadow({ mode: 'open' }).innerHTML = `
      <style>
        :host { position: absolute; left: 691px; top: 492px; width: 333px; height: 66px; box-sizing: border-box; display: flex; flex-direction: column; background: #2d3a44; border: 1px solid #000; border-width: 2px 2px 2px 0; font-family: "Liberation Sans", "Noto Sans CJK SC", sans-serif; color: #dde3e8; overflow: hidden; }
        .head { position: relative; height: 15px; flex: none; display: flex; align-items: center; padding: 0 2px 0 5px; background: #2f3b45; }
        .logo { font-weight: 700; font-size: 8.500px; color: #c9ced2; }
        .logo em { font-style: normal; color: #d8423c; }
        .pill { font-size: 6.200px; border-radius: 7px; background: #47535c; padding: 1px 3px; color: #bcc5cb; margin-left: 2px; }
        .vip { font-weight: 700; font-size: 6.500px; padding: 1px 2px; background: #3e3a24; color: #e3ae33; margin-left: 5px; }
        .head .right { margin-left: auto; display: flex; align-items: center; }
        .head .right > * { width: 17.400px; display: flex; justify-content: center; align-items: center; font-size: 8px; color: #c5ccd1; }
        .brown { position: absolute; left: 306px; top: 1px; width: 9px; height: 11px; background: #a78862; }
        .main { height: 30px; flex: none; display: flex; background: #27323b; }
        .tab { display: flex; align-items: center; justify-content: center; flex: none; background: #39688f; }
        .t1 { width: 36px; background: #3f97e6; }
        .dd { width: 7px; background: #3f97e6; margin-left: 1px; color: #fff; font-size: 6px; }
        .t2, .t3 { width: 43.500px; }
        .cam { width: 46px; margin-left: 2px; flex: none; display: flex; }
        .cam .ms { width: 13px; display: flex; flex-direction: column; background: #1e272e; }
        .cam .ms div { flex: 1; display: flex; align-items: center; justify-content: center; }
        .cam .lens { flex: 1; display: flex; align-items: center; justify-content: center; background: #1b2329; margin-left: 1px; }
        .dots { width: 5px; margin-left: 1px; flex: none; background: repeating-linear-gradient(#3b474f 0 1px, #10161a 1px 2px); }
        .clock { width: 74px; flex: none; padding: 4px 0 0 5px; box-sizing: border-box; }
        .time { font: 12.400px/14px "Liberation Sans", sans-serif; color: #eef2f4; }
        .size { font-size: 7px; line-height: 9px; color: #cfd6da; white-space: nowrap; }
        .pause { width: 16px; display: flex; align-items: center; justify-content: center; gap: 2px; flex: none; }
        .pause i { width: 2.500px; height: 8px; background: #5c6a74; }
        .foot { flex: 1; display: flex; align-items: center; gap: 4px; padding: 0 8px 0 6px; font-size: 6.750px; background: #3a4853; color: #cfd6da; }
        .foot .box { width: 7px; height: 7px; margin-right: 1px; border: 1px dashed #b6bfc5; flex: none; }
        .foot svg { margin-left: auto; }
      </style>
      <div class="head">
        <span class="logo">BANDI<em>CAM</em></span><span class="pill">电脑录屏</span><span class="vip">VIP</span>
        <div class="right">
          <span><svg width="8" height="7"><path d="M0 1h3l1 1h4v5H0z" fill="#c5ccd1"/></svg></span>
          <span><svg width="8" height="8"><circle cx="4" cy="4" r="3.500" fill="#c5ccd1"/><path d="M4 2v2h2" stroke="#2f3b45" fill="none"/></svg></span>
          <span>?</span>
          <span><svg width="7" height="5"><circle cx="1" cy="2" r="1.500" fill="#b08a55"/><circle cx="6" cy="3" r="1.500" fill="#b08a55"/></svg></span>
          <span><svg width="6" height="2"><path d="M0 1h6" stroke="#c5ccd1"/></svg></span>
          <span><svg width="7" height="7"><path d="M.5.5l6 6M6.500.5l-6 6" stroke="#98a4ac"/></svg></span>
        </div>
        <div class="brown"></div>
      </div>
      <div class="main">
        <div class="tab t1"><svg width="15" height="13" viewBox="0 0 15 13" fill="none" stroke="#fff" stroke-width="1.300"><rect x=".700" y=".700" width="13.600" height="8.600"/><path d="M7.500 10v2M4 12.300h7"/></svg></div>
        <div class="tab dd">▾</div>
        <div class="tab t2"><svg width="16" height="10" viewBox="0 0 16 10"><path d="M3 0h10c2 0 3 6 3 8s-2 2-3 1l-2-2H5L3 9C2 10 0 10 0 8s1-8 3-8z" fill="#9fb6c8"/><circle cx="11.500" cy="3.500" r="1" fill="#39688f"/><path d="M3 3.500h3M4.500 2v3" stroke="#39688f"/></svg></div>
        <div class="tab t3"><svg width="15" height="11" viewBox="0 0 15 11"><rect y="0" width="15" height="6" rx="1" fill="#9fb6c8"/><path d="M3 3l3-2h3l3 2z" fill="#39688f"/><text x="7.500" y="11" font-size="5" font-weight="700" text-anchor="middle" fill="#9fb6c8" font-family="Liberation Sans">HDMI</text></svg></div>
        <div class="cam">
          <div class="ms">
            <div><svg width="9" height="9" viewBox="0 0 9 9"><path d="M3 0l5 3-2 1 2 3-1 1-2-3-1 2z" fill="#e8edf0"/></svg></div>
            <div><svg width="7" height="9" viewBox="0 0 7 9"><rect x="2" width="3" height="5" rx="1.500" fill="#66747e"/><path d="M1 4a2.500 2.500 0 0 0 5 0M3.500 7v2" stroke="#66747e" fill="none"/></svg></div>
          </div>
          <div class="lens"><svg width="12" height="14" viewBox="0 0 12 14"><circle cx="6" cy="6" r="5" fill="#647079"/><circle cx="6" cy="6" r="2.200" fill="#232c33"/><path d="M2 13h8" stroke="#647079" stroke-width="1.500"/></svg></div>
        </div>
        <div class="dots"></div>
        <div class="clock"><div class="time">00:00:00</div><div class="size">0 bytes / 39.4GB</div></div>
        <div class="pause"><i></i><i></i></div>
      </div>
      <div class="foot"><span class="box"></span><span>1920x1080 - (0, 0), (1920, 1080) - 显示器 1</span>
        <svg width="7" height="4"><path d="M.5.5L3.500 3.500 6.500.5" fill="none" stroke="#aab4bb"/></svg>
      </div>
      <svg style="position:absolute;left:266px;top:10px" width="66" height="38" viewBox="0 0 66 38">
        <circle cx="33" cy="22" r="15" fill="#1b242a"/>
        <circle cx="31" cy="22" r="14" fill="#75752c"/>
        <circle cx="27" cy="20" r="14" fill="#ef6a2c"/>
        <circle cx="33" cy="12" r="6" fill="#d98a3c" opacity=".6"/>
        <text x="27" y="23" font-size="8" font-weight="700" text-anchor="middle" fill="#fff" font-family="Liberation Sans">REC</text>
        <path d="M48 16h3l1-2h4l1 2h3v9H48z" fill="#a8b4bc"/><circle cx="54" cy="20" r="2.500" fill="#2d3a44"/>
        <path d="M32 26v12l3-3 2 4 2-1-2-4h4z" fill="#fff" stroke="#222" stroke-width=".5"/>
      </svg>`;
  }
}
customElements.define('bandi-panel', BandiPanel);

class BandiMark extends HTMLElement {
  connectedCallback() {
    const tray = [
      '<circle cx="5" cy="5" r="4" fill="#4dbb4d" stroke="#cfc" />', '<rect x="1" y="3" width="8" height="6" fill="none" stroke="#c44"/>',
      '<rect x="1" y="1" width="8" height="8" fill="#2b9ad8"/>', '<rect x="1" y="1" width="8" height="8" fill="#2a78d8"/>',
      '<rect x="1" y="1" width="8" height="8" rx="2" fill="#d43030"/>', '<ellipse cx="5" cy="5" rx="3" ry="4" fill="#d860a0"/>',
      '<path d="M2 7a3 3 0 0 1 6 0z" fill="#9ac8e8"/>', '<path d="M3 2v6M7 2v6M2 8h6" stroke="#ddd"/>',
      '<rect x="1" y="1" width="6" height="6" fill="none" stroke="#ddd"/><rect x="3" y="3" width="6" height="6" fill="none" stroke="#ddd"/>',
      '<rect x="1" y="1" width="8" height="8" fill="#d8b040"/>', '<rect x="3" y="1" width="4" height="8" rx="2" fill="#2a88e8"/>',
      '<path d="M1 4h2l3-2v6L3 6H1z" fill="#ccc"/>', '<circle cx="5" cy="5" r="3.500" fill="#5aa85a"/>',
      '<path d="M1 1h8v5c0 1-2 3-4 3S1 7 1 6z" fill="#e8a020"/>', '<circle cx="5" cy="5" r="4" fill="#c8c020"/>',
      '<rect x="1" y="3" width="8" height="5" fill="#ccc"/>'
    ];
    this.attachShadow({ mode: 'open' }).innerHTML = `
      <style>
        :host { position: absolute; left: 724px; right: 4px; bottom: 1px; height: 20px; display: flex; align-items: center; }
        .tray { display: flex; gap: 2.700px; margin-top: 5px; width: 205px; flex: none; }
        .tray svg { width: 10px; height: 10px; flex: none; filter: blur(.25px); }
        .mark { display: flex; align-items: center; gap: 4px; flex: none; }
        .dot { width: 16px; height: 16px; box-sizing: border-box; border-radius: 50%; background: #d1202a; border: 3px solid #111; outline: 1px solid #eee; }
        .txt { font: 700 12.400px/16px "Liberation Sans", sans-serif; letter-spacing: -.2px; color: #1a1a1a; -webkit-text-stroke: .6px #eee; }
        .txt em { font-style: normal; color: #d1202a; }
      </style>
      <div class="tray">${tray.map(t => `<svg viewBox="0 0 10 10">${t}</svg>`).join('')}</div>
      <div class="mark"><span class="dot"></span><span class="txt">BANDI<em>CAM</em></span></div>`;
  }
}
customElements.define('bandi-mark', BandiMark);
</script>
</body>
</html>
